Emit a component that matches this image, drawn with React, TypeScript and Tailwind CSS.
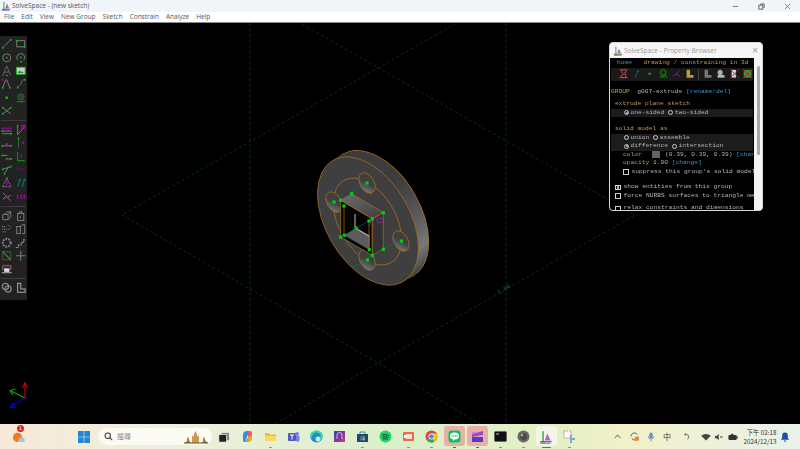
import type { ReactNode } from 'react'

const G = '#00b800'
const M = '#b000b0'
const T = '#0e6a6a'

const mono = "font-['Liberation_Mono',monospace] text-[6.25px] leading-[8.5px] whitespace-pre"

const Ic = ({ children }: { children?: ReactNode }) => (
	<svg viewBox="0 0 13 13" className="w-[11.5px] h-[11.5px]" fill="none" stroke="#858585" strokeWidth="1">
		{children}
	</svg>
)

const Dot = ({ x, y, c = G, s = 2 }: { x: number; y: number; c?: string; s?: number }) => (
	<rect x={x - s / 2} y={y - s / 2} width={s} height={s} fill={c} stroke="none" />
)

const section1 = [
	<Ic><path d="M2 11 11 2" /><Dot x={2} y={11} /><Dot x={11} y={2} /></Ic>,
	<Ic><rect x="2" y="3" width="9" height="7" /><Dot x={2} y={3} /><Dot x={11} y={10} /></Ic>,
	<Ic><circle cx="6.5" cy="6.5" r="4.5" /><Dot x={6.5} y={6.5} /></Ic>,
	<Ic><path d="M3 9a4.5 4.5 0 1 1 7 0" /><Dot x={6.5} y={6} /><Dot x={7} y={11} /></Ic>,
	<Ic><path d="M2 12 6.5 1 11 12M4 8h5" strokeDasharray="2 .6" /><path d="M5 12h3" /></Ic>,
	<Ic><rect x="1.5" y="2.5" width="10" height="8" fill="#ccc" stroke={G} /><path d="M3 9l2-3 2 2 1-1 2 2z" fill="#666" stroke="none" /></Ic>,
	<Ic><path d="M2 11 5 2.5 6.5 2 10 11" /><Dot x={1.5} y={2} c={M} /><Dot x={2} y={11} /><Dot x={10} y={11} /></Ic>,
	<Ic><path d="M11 2C6 2 8 6 6 8S2 9 3 11" strokeDasharray="2.5 .8" /><Dot x={11} y={2} /><Dot x={3} y={11} /></Ic>,
	<Ic><Dot x={6.5} y={6.5} s={3} /></Ic>,
	<Ic><circle cx="6.5" cy="5.5" r="3.5" stroke="#2f7a2f" /><circle cx="6.5" cy="5.5" r="1.5" stroke="#2f7a2f" /><path d="M2 11h9" stroke={G} /></Ic>,
	<Ic><path d="M2 3 11 10M11 3 2 10" /><Dot x={2} y={3} /><Dot x={11} y={3} /><Dot x={2} y={10} /></Ic>,
	<Ic />,
]

const section2 = [
	<Ic><path d="M1 8h11M1 11h11" /><path d="M1 5h11" stroke={M} strokeDasharray="2 1" strokeWidth="2" /><Dot x={1.5} y={8} /><Dot x={11.5} y={11} /></Ic>,
	<Ic><path d="M3 12V2M3 12 11 3" /><path d="M7 2h5M7 5h4" stroke={M} strokeWidth="2" /><Dot x={3} y={2} /></Ic>,
	<Ic><path d="M1 10h11" /><path d="M5 8h3" stroke={M} strokeWidth="2" /><Dot x={1.5} y={10} /><Dot x={11.5} y={10} /></Ic>,
	<Ic><path d="M4 1v11" stroke="#2f7a2f" /><path d="M8 5l1 3 1-3" stroke={M} /><Dot x={4} y={1.5} /></Ic>,
	<Ic><path d="M1 5h6M5 9h7" /><Dot x={1.5} y={5} /><Dot x={11.5} y={9} /><path d="M7 7h1" stroke={M} /></Ic>,
	<Ic><path d="M3 1v10h8" stroke={G} /><path d="M7 3v5" stroke={M} /></Ic>,
	<Ic><path d="M2 6 11 3M4 11l4-7" /><Dot x={2} y={6} /><Dot x={11} y={3} /><Dot x={4} y={11} /></Ic>,
	<Ic><path d="M4 6h1M8 6h1" stroke={M} strokeWidth="2" /></Ic>,
	<Ic><path d="M6.5 1.5 11.5 11h-10z" strokeDasharray="2 1" /><path d="M6.5 4v5" stroke={M} strokeWidth="1.5" /><Dot x={6.5} y={1.5} /></Ic>,
	<Ic><path d="M3 11 6 2M8 11l3-9" stroke={T} strokeWidth="1.5" /><path d="M4 4 6 2l1 2M9 4l2-2 1 2" stroke={T} /></Ic>,
	<Ic><path d="M2 2 11 11M2 9l9-4" /><path d="M5 5l3 3" stroke={M} strokeWidth="2" /></Ic>,
	<Ic><path d="M3 4v5M7 4v5M10.5 4v5" stroke={M} strokeWidth="1.5" /></Ic>,
]

const section3 = [
	<Ic><path d="M2 5h6v6H2zM8 5l3-3v6l-3 3M4 5l3-3h4" /></Ic>,
	<Ic><rect x="3" y="4" width="7" height="8" /><path d="M5 4V2h3v2M6 7v2" /></Ic>,
	<Ic><path d="M1 4h4M1 7h6M2 10h4M8 2l3 3-3 3" strokeDasharray="1.5 .8" /></Ic>,
	<Ic><rect x="2" y="4" width="4" height="8" /><path d="M6 4 8 2h3v10H8" /></Ic>,
	<Ic><circle cx="6.5" cy="6.5" r="4.5" strokeWidth="2.2" strokeDasharray="2 1.2" /></Ic>,
	<Ic><path d="M1 12h3V9h3V6h3V3h2" strokeDasharray="3 1" strokeWidth="1.4" /></Ic>,
	<Ic><rect x="2" y="2" width="9" height="9" stroke="#555" /><path d="M2 2 11 11" stroke="#2e8a2e" strokeWidth="1.5" /></Ic>,
	<Ic><path d="M1 6.5h11M6.5 1v11" /><Dot x={6.5} y={6.5} /><path d="M6.5 1v4" stroke="#2e8a2e" /></Ic>,
	<Ic><path d="M2 3h9" stroke="#a33" strokeWidth="2" /><path d="M2 3v5M11 3v5" /><rect x="3.5" y="6" width="6" height="4" fill="#dde" stroke="none" /><path d="M1 11h11" stroke="#ccc" /></Ic>,
	<Ic />,
]

const section4 = [
	<Ic><circle cx="5" cy="5" r="3.5" strokeWidth="1.4" /><circle cx="8" cy="8" r="3.5" strokeWidth="1.4" /></Ic>,
	<Ic><path d="M3 1.5v10h8.5V8H6.5V1.5z" strokeWidth="1.2" stroke="#a5a5a5" /></Ic>,
]

const Tools = ({ items }: { items: ReactNode[] }) => (
	<div className="grid grid-cols-[13.5px_13.5px] auto-rows-[13.3px] place-items-center">
		{items.map((icon, i) => (
			<div key={i} className="flex">{icon}</div>
		))}
	</div>
)

const Divider = () => <div className="h-[1px] mx-[1px] my-[2.5px] bg-[#3c3c3c]" />

const holes = [
	[367, 183],
	[334, 202],
	[401, 241],
	[367, 260],
]

const points = [
	[351.7, 193.7], [340.7, 200.3], [344, 206], [383.3, 212.7], [372.3, 218.7], [369, 221],
	[356, 228], [344.3, 235.3], [340.7, 237], [369.3, 249.7], [383.3, 249.3], [372.3, 255.3],
	[367, 183], [334, 202], [401.5, 241], [367.5, 260],
]

const rimSteps = [10, 9, 8, 7, 6, 5, 4, 3, 2, 1]

const Scene = () => (
	<svg viewBox="0 23 800 401" className="absolute inset-0 w-full h-full">
		<defs>
			<linearGradient id="rim" gradientUnits="userSpaceOnUse" x1="345" y1="150" x2="428" y2="250">
				<stop offset="0.2" stopColor="#3c3c3c" />
				<stop offset="0.6" stopColor="#787878" />
				<stop offset="0.9" stopColor="#333" />
			</linearGradient>
			<linearGradient id="hole" x1="0" y1="0" x2="1" y2="1">
				<stop offset="0.5" stopColor="#3f3f3f" />
				<stop offset="1" stopColor="#8a8a8a" />
			</linearGradient>
			<linearGradient id="wall" x1="0" y1="0" x2="1" y2="1">
				<stop offset="0" stopColor="#707070" />
				<stop offset="1" stopColor="#3c3c3c" />
			</linearGradient>
		</defs>
		<g stroke={T} strokeOpacity="0.5" strokeWidth="0.8" strokeDasharray="3 2.5" fill="none">
			<path d="M250 23V424M506 23V424" />
			<path d="M302 24 635 215 378 363 122 215 455 24" />
			<path d="M275 424 378 363 480 424" />
		</g>
		<text x="497" y="293" fill={T} fontSize="6" fontFamily="Liberation Mono, monospace" transform="rotate(-30 500 291)">1.00</text>

		{/* disk */}
		<ellipse cx="378" cy="215" rx="70" ry="42" fill="url(#rim)" stroke="#a8701f" strokeWidth="1.2" transform="rotate(60 378 215)" />
		{rimSteps.map((s) => (
			<ellipse key={s} cx={368 + s} cy={221 - s * 0.6} rx="70" ry="42" fill="url(#rim)" transform={`rotate(60 ${368 + s} ${221 - s * 0.6})`} />
		))}
		<g stroke="#a8701f" strokeWidth="0.7">
			<ellipse cx="368" cy="221" rx="70" ry="42" fill="#3f3f3f" transform="rotate(60 368 221)" />
			<ellipse cx="367.5" cy="221.5" rx="47.5" ry="28.5" fill="none" transform="rotate(60 367.5 221.5)" />
			{holes.map(([x, y]) => (
				<ellipse key={x * y} cx={x} cy={y} rx="11" ry="7" fill="url(#hole)" transform={`rotate(60 ${x} ${y})`} />
			))}
		</g>

		{/* square cut */}
		<g stroke="#a8701f" strokeWidth="0.7">
			<path d="M340.7 200.3 372.3 218.7V255.3L340.7 237z" fill="#050505" />
			<path d="M340.7 200.3 351.7 193.7 383.3 212.7 372.3 218.7z" fill="url(#wall)" />
			<path d="M344 235.3 356 228 370 236 369.3 249.7z" fill="#5c5c5c" stroke="none" />
			<path d="M372.3 218.7 383.3 212.7V249.3L372.3 255.3z" fill="#333" />
			<path d="M344 206V235.3M369 221V249.7" fill="none" />
		</g>
		<path d="M355 214V227M357 229 369 236" stroke="#e8e8e8" strokeWidth="0.8" fill="none" />

		{/* hole axis lines */}
		<g stroke={T} strokeWidth="0.8" strokeDasharray="2 1" fill="none">
			<path d="M319 211 351.7 193.7M353 268 383 249M383 249 401 241M351 191 367 183M344 236 372 219" />
		</g>
		<path d="M369 225l3-3 2 3-3 1zM377 219l5-1 1 4-5 1zM372 221h-4" stroke="#d000d0" strokeWidth="0.9" strokeDasharray="1.4 0.6" fill="none" />
		{points.map(([x, y]) => (
			<rect key={`${x}-${y}`} x={x - 1.6} y={y - 1.6} width="3.2" height="3.2" fill="#00d010" />
		))}

		{/* axes */}
		<g fill="none" strokeWidth="1.1">
			<path d="M25 398V384M22.5 388 25 382.5 27.5 388" stroke="#d00000" />
			<path d="M25 398 11 391M15.5 389 10 390.5 13 395" stroke="#00b000" />
			<path d="M25 398 11 407M14 402.5 10 408 16 407" stroke="#0000e0" />
		</g>
	</svg>
)

const Row = ({ children, band, className = '' }: { children: ReactNode; band?: boolean; className?: string }) => (
	<div className={`h-[8.5px] mx-[1px] flex items-center ${mono} ${band ? 'bg-[#1c1c1c]' : ''} ${className}`}>{children}</div>
)

const Radio = ({ on }: { on?: boolean }) => (
	<span className="w-[5px] h-[5px] rounded-full border border-[#c8c8c8] flex items-center justify-center mr-[1.5px] shrink-0">
		{on && <span className="w-[2px] h-[2px] rounded-full bg-[#c8c8c8]" />}
	</span>
)

const Check = ({ on }: { on?: boolean }) => (
	<span className="w-[5.5px] h-[5.5px] border border-[#d0d0d0] mr-[3px] shrink-0 flex items-center justify-center">
		{on && <span className="w-[2.5px] h-[2.5px] bg-[#aaa]" />}
	</span>
)

const Slash = () => <path d="M1 1 12 12M12 1 1 12" stroke="#b02020" strokeWidth="1" fill="none" />

const Browser = () => (
	<div className="absolute left-[609px] top-[19px] w-[154px] h-[169px] rounded-[4px] border border-[#d8d8d8] bg-[#f3f3f3] overflow-hidden flex flex-col">
		<div className="h-[15px] shrink-0 flex items-center pl-[3px] pr-[4px] bg-[#f6f6f6]">
			<SolveLogo size={10} />
			<span className="ml-[1px] text-[6.5px] text-[#9a9a9a] font-['Open_Sans',sans-serif]">SolveSpace - Property Browser</span>
			<span className="ml-auto text-[10px] leading-none text-[#999] font-['Liberation_Sans',sans-serif]">×</span>
		</div>
		<div className="flex flex-1 min-h-0">
			<div className="flex-1 bg-black overflow-hidden text-[#b4b4b4] pt-[1px] min-w-0 blur-[0.25px]">
				<Row className="pl-[6px]">
					<span className="text-[#3f93c8]">home</span>
					<span className="text-[#c09a58] ml-[11.5px]">drawing / constraining in 3d</span>
				</Row>
				<div className="h-[13px] mx-[1px] bg-[#1a1a1a] flex items-center pl-[7px] gap-[2px]">
					<Ic><path d="M3 2h7L8 6.5 10 11H3l3-4.5z" stroke="#888" /><Slash /></Ic>
					<Ic><path d="M5 11 8 3M6.500 4 8 2.500 9 4.500" stroke={T} /></Ic>
					<Ic><Dot x={6.5} y={6.5} s={2.5} /></Ic>
					<Ic><circle cx="6" cy="5" r="3.2" stroke={G} /><path d="M2 10h6M8 8l3 3" stroke={G} /></Ic>
					<Ic><path d="M2 10 10 3M5 7l5 2" stroke={M} /></Ic>
					<Ic><path d="M3 2h4v6h4v3H3z" fill="#b8a030" stroke="none" /></Ic>
					<div className="w-[1px] h-[11px] bg-[#444] mx-[1px]" />
					<Ic><path d="M3 2h4v6h4v3H3z" fill="#777" stroke="none" /></Ic>
					<Ic><circle cx="6" cy="5" r="3" fill="#aaa" stroke="none" /><path d="M3 8h8v3H3z" fill="#bbb" stroke="none" /></Ic>
					<Ic><path d="M3 2h5v9H3z" fill="#ddd" stroke="none" /><Slash /></Ic>
					<Ic><path d="M2 2h9v9H2z" fill="#2c9a3c" stroke="none" /><Slash /></Ic>
				</div>
				<Row className="mt-[7px]">
					<span className="text-[#c09a58]">GROUP</span>
					<span className="ml-[7.5px]">g007-extrude </span>
					<span className="text-[#3f93c8]">[rename/del]</span>
				</Row>
				<Row className="mt-[4px] pl-[4px] text-[#c09a58]">extrude plane sketch</Row>
				<Row band className="pl-[13px]">
					<Radio on />one-sided<span className="w-[4px]" /><Radio />two-sided
				</Row>
				<Row className="mt-[8px] pl-[4px] text-[#c09a58]">solid model as</Row>
				<Row band className="pl-[13px]">
					<Radio />union<span className="w-[4px]" /><Radio />assemble
				</Row>
				<Row band className="pl-[13px]">
					<Radio on />difference<span className="w-[4px]" /><Radio />intersection
				</Row>
				<Row className="pl-[12px]">
					<span className="text-[#c09a58] w-[29px] shrink-0">color</span>
					<span className="w-[8px] h-[7px] bg-[#636363] mr-[5px] shrink-0" />
					(0.39, 0.39, 0.39) <span className="text-[#3f93c8]">[change]</span>
				</Row>
				<Row className="pl-[12px]">
					<span className="text-[#c09a58]">opacity</span> 1.00 <span className="text-[#3f93c8]">[change]</span>
				</Row>
				<Row className="pl-[12px]">
					<Check />suppress this group's solid model
				</Row>
				<Row className="mt-[7px] pl-[4px]">
					<Check on />show entities from this group
				</Row>
				<Row className="pl-[4px]">
					<Check />force NURBS surfaces to triangle mesh
				</Row>
				<Row className="mt-[4px] pl-[4px]">
					<Check />relax constraints and dimensions
				</Row>
			</div>
			<div className="w-[8px] shrink-0 flex justify-center pt-[8px] bg-[#f4f4f4]">
				<div className="w-[3px] h-[89px] rounded-full bg-[#a8a8a8]" />
			</div>
		</div>
	</div>
)

const SolveLogo = ({ size }: { size: number }) => (
	<svg viewBox="0 0 12 12" width={size} height={size} fill="none" className="shrink-0">
		<path d="M3.500 1v9H11" stroke="#30b030" strokeWidth="1.2" />
		<path d="M7 3 5 9h5z" fill="#c060c0" />
		<path d="M1 10h4" stroke="#d04040" strokeWidth="1.2" />
		<path d="M1 11.300h9" stroke="#4060d0" strokeWidth="0.8" />
	</svg>
)

const Task = ({ children, active, open, focus }: { children: ReactNode; active?: boolean; open?: boolean; focus?: boolean }) => (
	<div className="w-[23px] h-[25px] flex items-center justify-center relative shrink-0">
		{active && <div className="absolute inset-x-[1px] top-[2px] h-[20px] rounded-[3px] bg-[#eab0a8]" />}
		{focus && <div className="absolute inset-x-[1px] top-[2px] h-[20px] rounded-[3px] bg-[#f1f5ea]" />}
		<div className="relative flex">{children}</div>
		{open && <div className="absolute bottom-[1px] left-[10px] w-[3px] h-[1.5px] rounded-full bg-[#8a8a8a]" />}
		{active && <div className="absolute bottom-[1px] left-[10px] w-[3px] h-[1.5px] rounded-full bg-[#d02020]" />}
		{focus && <div className="absolute bottom-[1px] left-[7px] w-[9px] h-[1.5px] rounded-full bg-[#2a80c8]" />}
	</div>
)

const Sv = ({ children, w = 13 }: { children: ReactNode; w?: number }) => (
	<svg viewBox="0 0 13 13" width={w} height={w} className="shrink-0">
		{children}
	</svg>
)

const Tray = ({ children, className }: { children: ReactNode; className: string }) => (
	<div className={`flex items-center justify-center shrink-0 ${className}`}>{children}</div>
)

const Taskbar = () => (
	<div className="h-[25px] shrink-0 flex items-center bg-[linear-gradient(90deg,#f7e9d8_0%,#eef0dc_20%,#dcefcb_50%,#e4f0c4_70%,#f1f1c8_78%,#eaf1ea_100%)]">
		<Tray className="w-[36px] relative">
			<svg viewBox="0 0 14 14" width="13" height="13">
				<circle cx="6" cy="8" r="5" fill="#ee7a24" />
				<path d="M6 13h7a3 3 0 0 0-2-5H8z" fill="#a8c4e4" />
			</svg>
			<span className="absolute left-[17px] top-[-5px] w-[7px] h-[7px] rounded-full bg-[#d02828] text-white text-[5px] leading-[7px] text-center font-['Liberation_Sans',sans-serif]">1</span>
		</Tray>
		<div className="w-[36.5px] shrink-0" />
		<Task>
			<svg viewBox="0 0 12 12" width="12" height="12">
				<path d="M0 0h5.700v5.700H0zM6.300 0H12v5.700H6.300zM0 6.300h5.700V12H0zM6.300 6.300H12V12H6.300z" fill="#1f86d8" />
			</svg>
		</Task>
		<div className="w-[114px] h-[17px] ml-[2.5px] rounded-full bg-[#fbfbf4] flex items-center pl-[6px] shrink-0 relative">
			<svg viewBox="0 0 12 12" width="9" height="9" fill="none" stroke="#333" strokeWidth="1.4">
				<circle cx="5" cy="5" r="3.600" />
				<path d="M7.600 7.600 11 11" />
			</svg>
			<span className="ml-[4px] text-[7px] text-[#8a8a8a] font-['Noto_Sans_CJK_TC',sans-serif]">搜尋</span>
			<svg viewBox="0 0 26 14" width="26" height="14" className="absolute right-[3px] top-[1.5px]">
				<path d="M1 13 6 10 8 13zM18 13l4-3 3 3z" fill="#7a9a50" />
				<path d="M9 13V7l1-2 1 2V4l1.500-3L14 4v3l1-2 1 2v6z" fill="#c89a50" />
				<path d="M4 13V9l1-2 1 2v4zM20 13V9l1-2 1 2v4z" fill="#a87838" />
				<path d="M1 13h24" stroke="#6a4a28" />
			</svg>
		</div>
		<div className="w-[0.5px] shrink-0" />
		<Task>
			<Sv w={12}>
				<rect x="4" y="2" width="8" height="8" fill="#888" />
				<rect x="1" y="4" width="8" height="8" fill="#222" stroke="#f0f0f0" strokeWidth="0.7" />
			</Sv>
		</Task>
		<Task>
			<Sv>
				<path d="M2 5a4 4 0 0 1 4-4h2L6 7l-2 5H3a2 2 0 0 1-1-2z" fill="#2f8fe0" />
				<path d="M7 1h2a2 2 0 0 1 2 2v4H7z" fill="#e8557a" />
				<path d="M11 5v3a4 4 0 0 1-4 4H5l2-5z" fill="#f0a030" />
				<path d="M4 9h3v3H4z" fill="#80c040" />
			</Sv>
		</Task>
		<Task open>
			<Sv>
				<path d="M1 3h4l1 1.500h6V11H1z" fill="#f2bd35" />
				<path d="M1 6h11v5H1z" fill="#fbd860" />
			</Sv>
		</Task>
		<Task>
			<Sv>
				<rect x="1" y="3" width="8" height="8" rx="1" fill="#5058b8" />
				<circle cx="10" cy="4" r="2" fill="#7b83e0" />
				<path d="M9 6h3.500v4a2 2 0 0 1-3.500 1z" fill="#7b83e0" />
				<path d="M3 5h4M5 5v4.500" stroke="#fff" strokeWidth="1" />
			</Sv>
		</Task>
		<Task>
			<Sv>
				<circle cx="6.500" cy="6.500" r="6" fill="#1d8fd0" />
				<path d="M1 8a5.500 5.500 0 0 1 11-2c0 2-3 2.500-4 1.500" fill="none" stroke="#3fd8a0" strokeWidth="2" />
				<circle cx="8" cy="9" r="2.500" fill="#bdf0e0" />
			</Sv>
		</Task>
		<Task>
			<Sv>
				<rect x="1" y="1" width="11" height="11" fill="#7e3a9c" />
				<path d="M1 1h6L1 8z" fill="#3a4ab0" />
				<path d="M12 12H6l6-6z" fill="#c83878" />
				<path d="M4 9V5a2.500 2.500 0 0 1 5 0v4" fill="none" stroke="#e6c8e8" strokeWidth="0.8" />
			</Sv>
		</Task>
		<Task open>
			<Sv>
				<path d="M1 4h11v8H1z" fill="#1a4a7a" />
				<path d="M4 4V2h5v2" fill="none" stroke="#2a98b0" strokeWidth="1" />
				<path d="M4.500 6h2v2h-2z" fill="#e84a30" />
				<path d="M6.800 6h2v2h-2z" fill="#50b040" />
				<path d="M4.500 8.300h2v2h-2z" fill="#30a0e0" />
				<path d="M6.800 8.300h2v2h-2z" fill="#f0b820" />
			</Sv>
		</Task>
		<Task>
			<Sv>
				<circle cx="6.500" cy="6.500" r="6" fill="#1ed760" />
				<path d="M3 5c2.500-.7 5-.4 7 .7M3.500 7c2-.5 4-.3 6 .7M4 9c1.500-.4 3-.2 4.500.5" fill="none" stroke="#123" strokeWidth="0.9" />
			</Sv>
		</Task>
		<Task open>
			<Sv>
				<rect x="1" y="2" width="11" height="9" rx="1" fill="#ee6a4a" />
				<rect x="4" y="4" width="6" height="5" fill="#fde0d4" />
				<path d="M2 5h2v3H2z" fill="#fff" />
			</Sv>
		</Task>
		<Task open>
			<Sv>
				<circle cx="6.500" cy="6.500" r="6" fill="#e8453a" />
				<path d="M6.500 6.500 1.300 9.500A6 6 0 0 0 9 12z" fill="#34a853" />
				<path d="M6.500 3.500h5.200A6 6 0 0 1 9 12z" fill="#fbbc05" />
				<circle cx="6.500" cy="6.500" r="3" fill="#fff" />
				<circle cx="6.500" cy="6.500" r="2.300" fill="#4285f4" />
			</Sv>
		</Task>
		<Task active>
			<Sv>
				<rect x="0.500" y="0.500" width="12" height="12" rx="3" fill="#06c755" />
				<ellipse cx="6.500" cy="6" rx="4.500" ry="3.500" fill="#fff" />
				<path d="M5 9h2l-2 2z" fill="#fff" />
				<path d="M4 5v2M5.800 5v2M7.500 5v2M9 5v2" stroke="#06c755" strokeWidth="0.7" />
			</Sv>
		</Task>
		<Task active>
			<Sv>
				<path d="M1 4 12 1v4L1 7z" fill="#9a4ac8" />
				<path d="M1 7h11v5H1z" fill="#5a3ac0" />
				<path d="M1 2h7L1 4z" fill="#d880d8" />
			</Sv>
		</Task>
		<Task open>
			<Sv>
				<rect x="0.500" y="1.500" width="12" height="10" rx="1" fill="#111" stroke="#555" strokeWidth="0.5" />
				<path d="M2 4h3" stroke="#eee" strokeWidth="0.8" />
			</Sv>
		</Task>
		<Task open>
			<Sv>
				<circle cx="6.500" cy="6.500" r="6" fill="#6a6a6a" />
				<circle cx="6.500" cy="6.500" r="3.500" fill="#4a4a4a" />
				<circle cx="5" cy="5" r="1.500" fill="#999" />
			</Sv>
		</Task>
		<Task focus>
			<SolveLogo size={14} />
		</Task>
		<Task open>
			<Sv>
				<rect x="1" y="1" width="7" height="7" fill="#fff" stroke="#e05050" strokeWidth="0.8" strokeDasharray="1.500 1" />
				<path d="M7 5h2v3h3v2H9v3H7z" fill="#78a8d8" />
			</Sv>
		</Task>

		<div className="w-[28px] shrink-0" />
		<Tray className="w-[17px]">
			<svg viewBox="0 0 10 6" width="7" height="5" fill="none" stroke="#333" strokeWidth="1.2"><path d="M1 5 5 1l4 4" /></svg>
		</Tray>
		<Tray className="w-[17px]">
			<svg viewBox="0 0 12 12" width="11" height="11" fill="none">
				<path d="M2 6a4 4 0 0 1 7-2.500M10 6a4 4 0 0 1-7 2.500" stroke="#555" strokeWidth="1" />
				<circle cx="8.500" cy="8.500" r="2.500" fill="#f08a20" />
			</svg>
		</Tray>
		<Tray className="w-[16px]">
			<svg viewBox="0 0 10 12" width="8" height="10" fill="none">
				<rect x="3" y="0.500" width="4" height="7" rx="2" fill="#5a8ac8" />
				<path d="M1.500 5a3.500 3.500 0 0 0 7 0M5 9v2.500" stroke="#5a7aa8" />
			</svg>
		</Tray>
		<Tray className="w-[17px]">
			<span className="text-[8px] text-[#444] font-['Noto_Sans_CJK_TC',sans-serif]">中</span>
		</Tray>
		<Tray className="w-[23px]">
			<svg viewBox="0 0 10 10" width="7" height="7" fill="none" stroke="#444" strokeWidth="1"><path d="M1 2h2.500a3.500 3.500 0 0 1 1 6.800M1 2l2-1.500M1 2l2 1.500" /></svg>
		</Tray>
		<Tray className="w-[15px]">
			<svg viewBox="0 0 12 10" width="10" height="8"><path d="M0 3.500a9 9 0 0 1 12 0L6 9.500z" fill="#444" /></svg>
		</Tray>
		<Tray className="w-[11px]">
			<svg viewBox="0 0 12 10" width="9" height="8" fill="#444"><path d="M0 3.500h2L5 1v8L2 6.500H0z" /><path d="M7 3.500l3 3M10 3.500l-3 3" stroke="#444" fill="none" /></svg>
		</Tray>
		<Tray className="w-[17px]">
			<svg viewBox="0 0 12 9" width="10" height="8" fill="#333"><rect x="0.500" y="2" width="10" height="6" rx="1.500" /><rect x="10.800" y="3.800" width="1" height="2.400" /><path d="M3 2 5 0l2 2" /></svg>
		</Tray>
		<div className="w-[35px] shrink-0 text-right text-[6.3px] leading-[9px] text-[#333] font-['Noto_Sans_CJK_TC',sans-serif] whitespace-nowrap">
			<div>下午 02:18</div>
			<div>2024/12/13</div>
		</div>
		<Tray className="flex-1 pr-[6px]">
			<svg viewBox="0 0 10 12" width="8" height="10" fill="#1f4ea8"><path d="M5 0.500a3.500 3.500 0 0 1 3.500 3.500v3L10 9.500H0L1.500 7V4A3.500 3.500 0 0 1 5 0.500zM3.500 10.300h3a1.500 1.500 0 0 1-3 0z" /></svg>
		</Tray>
	</div>
)

const menus = ['File', 'Edit', 'View', 'New Group', 'Sketch', 'Constrain', 'Analyze', 'Help']

export default function App() {
	return (
		<div className="w-[800px] h-[449px] flex flex-col overflow-hidden bg-black font-['Open_Sans',sans-serif]">
			<div className="h-[12px] shrink-0 bg-[#f1f4f9] flex items-center pl-[1px] text-[#555]">
				<SolveLogo size={10} />
				<span className="ml-[1px] text-[6.5px] leading-none">SolveSpace - (new sketch)</span>
				<div className="ml-auto flex items-center text-[#666]">
					<svg viewBox="0 0 8 8" width="7" height="7" className="mr-[19px]"><path d="M1 4h6" stroke="#777" /></svg>
					<svg viewBox="0 0 8 8" width="7" height="7" fill="none" stroke="#555" className="mr-[19px]"><rect x="1" y="2.500" width="4.500" height="4.500" /><path d="M3 2V1h4v4H6" /></svg>
					<svg viewBox="0 0 8 8" width="7" height="7" stroke="#777" className="mr-[9px]"><path d="M1 1l6 6M7 1 1 7" /></svg>
				</div>
			</div>
			<div className="h-[10px] shrink-0 bg-white flex items-center gap-[7px] pl-[4px] text-[6.5px] leading-none text-[#555]">
				{menus.map((m) => (
					<span key={m}>{m}</span>
				))}
			</div>
			<div className="h-[1px] shrink-0 bg-[#8a8a8a]" />
			<div className="flex-1 relative min-h-0">
				<Scene />
				<div className="absolute left-0 top-[13px] w-[27px] h-[264px] bg-[#222] pt-[1.5px]">
					<Tools items={section1} />
					<Divider />
					<Tools items={section2} />
					<Divider />
					<Tools items={section3} />
					<Divider />
					<Tools items={section4} />
				</div>
				<Browser />
			</div>
			<Taskbar />
		</div>
	)
}
